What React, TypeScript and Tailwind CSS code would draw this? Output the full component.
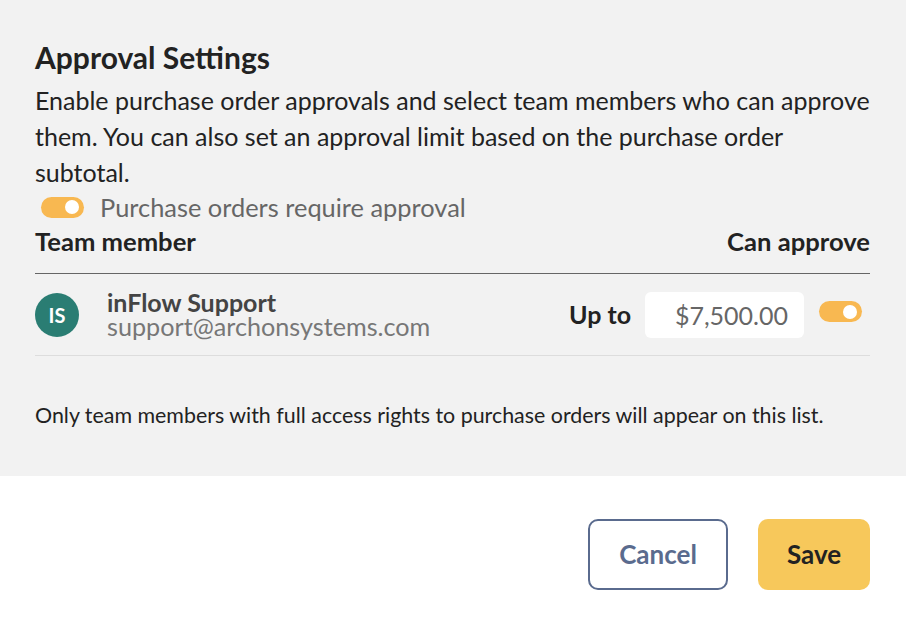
import { useState } from "react";

// Small pill toggle used for both switches
const Toggle = ({ on, onClick }: { on: boolean; onClick: () => void }) => (
  <button
    type="button"
    onClick={onClick}
    className={`relative w-[43px] h-[21px] rounded-full shrink-0 ${
      on ? "bg-[#f8b851]" : "bg-[#cfcfcf]"
    }`}
  >
    <span
      className={`absolute top-[3.5px] w-[14px] h-[14px] rounded-full bg-white ${
        on ? "left-[24px]" : "left-[4px]"
      }`}
    />
  </button>
);

const App = () => {
  const [requireApproval, setRequireApproval] = useState(true);
  const [canApprove, setCanApprove] = useState(true);
  const [limit, setLimit] = useState("$7,500.00");

  return (
    <div className="w-[906px] h-[630px] bg-white font-['Lato','Liberation_Sans',sans-serif] text-[#222]">
      {/* Settings panel */}
      <div className="bg-[#f2f2f2] h-[476px] pl-[35px] pr-[36px] pt-[39px]">
        <h2 className="text-[30px] font-bold leading-[36px] text-[#222]">
          Approval Settings
        </h2>
        <p className="text-[25px] leading-[36px] mt-[7px] text-[#222]">
          Enable purchase order approvals and select team members who can
          approve them. You can also set an approval limit based on the
          purchase order subtotal.
        </p>
        <div className="flex items-center gap-[16px] pl-[6px] h-[34px]">
          <Toggle
            on={requireApproval}
            onClick={() => setRequireApproval(!requireApproval)}
          />
          <span className="text-[25.4px] text-[#666]">
            Purchase orders require approval
          </span>
        </div>

        {/* Table header */}
        <div className="flex justify-between items-start h-[50px] border-b border-[#666]">
          <span className="text-[25.6px] leading-[34px] font-bold text-[#222]">
            Team member
          </span>
          <span className="text-[25.6px] leading-[34px] font-bold text-[#222]">
            Can approve
          </span>
        </div>

        {/* Member row */}
        <div className="flex items-center h-[82px] border-b border-[#dddddd]">
          <div className="w-[44px] h-[44px] rounded-full bg-[#2a7d73] flex items-center justify-center text-white font-bold text-[20px]">
            IS
          </div>
          <div className="ml-[28px] flex flex-col gap-[1px]">
            <span className="text-[25px] font-bold text-[#444] leading-[23px]">
              inFlow Support
            </span>
            <span className="text-[25.2px] text-[#777] leading-[23px]">
              support@archonsystems.com
            </span>
          </div>
          <div className="ml-auto flex items-center">
            <span className="text-[25px] font-bold text-[#222] mr-[14px]">
              Up to
            </span>
            <input
              value={limit}
              onChange={(e) => setLimit(e.target.value)}
              className="w-[159px] h-[46px] rounded-[6px] bg-white text-right pr-[16px] text-[25px] text-[#666] outline-none"
            />
            <div className="ml-[15px] mr-[8px]">
              <Toggle on={canApprove} onClick={() => setCanApprove(!canApprove)} />
            </div>
          </div>
        </div>

        <p className="text-[21.4px] leading-[30px] text-[#222] mt-[44px]">
          Only team members with full access rights to purchase orders will
          appear on this list.
        </p>
      </div>

      {/* Footer buttons */}
      <div className="flex justify-end gap-[30px] px-[36px] pt-[43px]">
        <button className="w-[140px] h-[71px] rounded-[10px] border-2 border-[#5a6b8e] text-[#5a6b8e] text-[26px] font-bold bg-white">
          Cancel
        </button>
        <button className="w-[112px] h-[71px] rounded-[10px] bg-[#f7c85b] text-[#222] text-[26px] font-bold">
          Save
        </button>
      </div>
    </div>
  );
};

export default App;
